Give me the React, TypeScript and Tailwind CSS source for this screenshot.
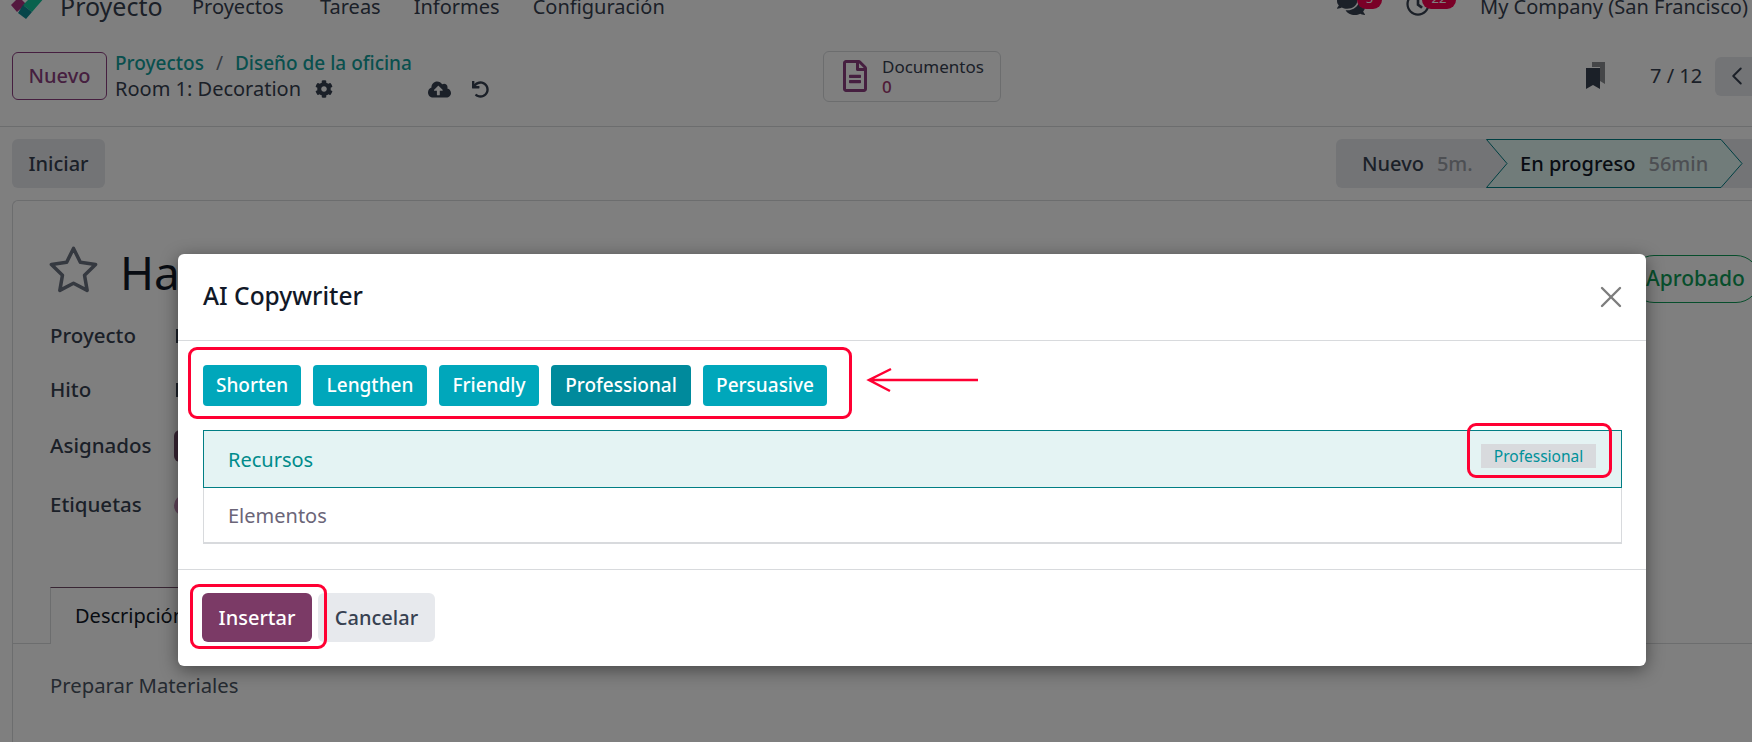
import { FaCloudUploadAlt, FaCog, FaComments, FaRegClock, FaRegFileAlt, FaUndo } from "react-icons/fa";
import { FiChevronLeft, FiStar, FiX } from "react-icons/fi";

const navItems = ["Proyectos", "Tareas", "Informes", "Configuración"];
const tones = ["Shorten", "Lengthen", "Friendly", "Professional", "Persuasive"];
const toneWidths: Record<string, string> = {
  Shorten: "w-[98px]",
  Lengthen: "w-[114px]",
  Friendly: "w-[100px]",
  Professional: "w-[140px]",
  Persuasive: "w-[124px]",
};

const Logo = () => (
  <svg width="34" height="26" viewBox="0 0 34 26" className="ml-[11px]">
    <path d="M0 11 L8 3 L15 10 L6 18 Z" fill="#a8327f" />
    <path d="M12 11 L20 3 L34 3 L21 18 Z" fill="#12c49a" />
    <path d="M12 11 L21 18 L15 25 L7 19 Z" fill="#0c8a94" />
  </svg>
);

const Badge = ({ text, className }: { text: string; className: string }) => (
  <span className={`absolute top-[-6px] h-[21px] rounded-[9px] bg-[#f5004f] text-white text-[13px] leading-[21px] text-center ${className}`}>
    {text}
  </span>
);

const Navbar = () => (
  <div className="-mt-[16px] h-[46px] flex items-center text-[#374151] text-[20px]">
    <Logo />
    <span className="ml-[15px] w-[132px] text-[25px]">Proyecto</span>
    <div className="flex gap-[33px]">
      {navItems.map((item, i) => (
        <span key={item} className={i === 0 ? "w-[95px]" : ""}>
          {item}
        </span>
      ))}
    </div>
    <div className="ml-auto flex items-center pr-[6px]">
      <div className="relative w-[69px] h-[26px] flex items-center">
        <FaComments className="text-[28px] text-[#374151] -mt-[7px]" />
        <Badge text="5" className="left-[20px] w-[25px]" />
      </div>
      <div className="relative w-[74px] h-[26px] flex items-center">
        <FaRegClock className="text-[24px] text-[#374151] -mt-[6px]" />
        <Badge text="22" className="left-[16px] w-[34px]" />
      </div>
      <span className="w-[266px] whitespace-nowrap">My Company (San Francisco)</span>
    </div>
  </div>
);

const ControlPanel = () => (
  <div className="h-[97px] pb-[4px] border-b border-[#d8dadd] flex items-center text-[#374151]">
    <div className="w-[823px] pl-3 flex items-center shrink-0">
      <button className="w-[95px] h-[48px] rounded-[6px] border border-[#8c3f80] text-[#8c3f80] text-[20px] font-medium">
        Nuevo
      </button>
      <div className="ml-2 flex flex-col">
        <div className="h-[26px] flex items-center text-[19px] font-medium text-[#12a09c] whitespace-nowrap">
          <span>Proyectos</span>
          <span className="mx-[12px] font-normal text-[#6b7280]">/</span>
          <span>Diseño de la oficina</span>
        </div>
        <div className="h-[26px] flex items-center text-[20px]">
          <span className="w-[187px] whitespace-nowrap">Room 1: Decoration</span>
          <FaCog className="ml-[13px] text-[18px]" />
          <FaCloudUploadAlt className="ml-[95px] text-[23px]" />
          <FaUndo className="ml-[21px] text-[17px]" />
        </div>
      </div>
    </div>
    <div className="w-[178px] h-[51px] rounded-[6px] border border-[#d8dadd] flex items-center pl-[15px] shrink-0">
      <FaRegFileAlt className="text-[32px] text-[#8c3f80]" />
      <div className="ml-[11px] pt-[2px] text-[17px] leading-[20px]">
        <div>Documentos</div>
        <div className="text-[#a03a70] font-medium">0</div>
      </div>
    </div>
    <div className="flex-1 flex items-center justify-end">
      <svg width="20" height="28" viewBox="0 0 20 28">
        <path d="M6 0 H19 V22 L14 19 V5 H6 Z" fill="#8a8c90" />
        <path d="M0 6 H14 V27 L7 23 L0 27 Z" fill="#374151" />
      </svg>
      <span className="ml-[44px] w-[52px] text-[20px] whitespace-nowrap">7 / 12</span>
      <div className="ml-[13px] w-[37px] h-[39px] rounded-l-[6px] bg-[#e7e9ed] flex items-center pl-[13px]">
        <FiChevronLeft className="text-[32px] -ml-[6px]" strokeWidth={1.6} />
      </div>
    </div>
  </div>
);

const StatusRow = () => (
  <div className="h-[73px] flex items-center justify-between pl-3 text-[#374151]">
    <button className="w-[93px] h-[49px] rounded-[6px] bg-[#e7e9ed] text-[20px] font-medium">Iniciar</button>
    <div className="w-[416px] h-[49px] rounded-l-[6px] bg-[#e7e9ed] flex items-center text-[20px] font-medium">
      <div className="w-[150px] pl-[26px] flex gap-[13px]">
        <span>Nuevo</span>
        <span className="text-[#9a9ea6]">5m.</span>
      </div>
      <div className="relative w-[257px] h-[49px]">
        <svg width="257" height="49" viewBox="0 0 257 49" className="absolute inset-0">
          <path d="M0.5 0.5 H235 L256 24.5 L235 48.5 H0.5 L21 24.5 Z" fill="#e2f8f4" stroke="#017e84" />
        </svg>
        <div className="absolute inset-0 pl-[34px] flex items-center gap-[13px] whitespace-nowrap">
          <span className="text-[#111827]">En progreso</span>
          <span className="text-[#9a9ea6]">56min</span>
        </div>
      </div>
    </div>
  </div>
);

const FieldRow = ({ label, top, children }: { label: string; top: string; children: React.ReactNode }) => (
  <div className={`h-[28px] pl-[37px] flex items-center ${top}`}>
    <span className="w-[124px] pb-[2px] text-[20.5px] font-medium text-[#374151]">{label}</span>
    {children}
  </div>
);

const Sheet = () => (
  <div className="ml-3 h-[600px] border border-r-0 border-[#d8dadd] rounded-tl-[6px] text-[#374151]">
    <div className="mt-[45px] h-[48px] pl-[37px] flex items-center">
      <FiStar className="text-[53px] text-[#6b7280] -ml-[3px]" strokeWidth={1.6} />
      <span className="ml-[20px] mt-[5px] text-[46px] text-[#111827]">Ha</span>
      <div className="ml-auto self-start mt-[9px] -mr-[8px] w-[130px] h-[48px] rounded-full border border-[#0f9d58] pl-[15px] flex items-center text-[21px] font-medium text-[#0f9d58]">
        Aprobado
      </div>
    </div>
    <FieldRow label="Proyecto" top="mt-[28px]">
      <span className="ml-[2px] w-[3px] h-[14px] bg-[#374151]" />
    </FieldRow>
    <FieldRow label="Hito" top="mt-[26px]">
      <span className="ml-[2px] w-[3px] h-[14px] bg-[#374151]" />
    </FieldRow>
    <FieldRow label="Asignados" top="mt-[28px]">
      <span className="w-[32px] h-[32px] rounded-[6px] bg-[#714b67]" />
    </FieldRow>
    <FieldRow label="Etiquetas" top="mt-[31px]">
      <span className="w-[50px] h-[21px] rounded-full bg-[#c58ab6]" />
    </FieldRow>
    <div className="mt-[68px] h-[57px] pl-[37px] border-b border-[#d8dadd]">
      <div className="w-[200px] h-[57px] border border-b-0 border-[#d8dadd] border-t-[#714b67] pl-[24px] flex items-center bg-white text-[20px] text-[#111827]">
        Descripción
      </div>
    </div>
    <p className="mt-[29px] pl-[37px] text-[20.3px] leading-[24px] text-[#4b5563]">Preparar Materiales</p>
  </div>
);

const Annotation = ({ className }: { className: string }) => (
  <div className={`absolute border-[3px] border-[#ff0033] rounded-[9px] ${className}`} />
);

const Modal = () => (
  <div className="relative w-[1468px] bg-white rounded-[6px] shadow-[0_4px_18px_rgba(0,0,0,0.45)] text-[#374151]">
    <div className="h-[87px] pl-[25px] pr-[24px] border-b border-[#d8dadd] flex items-center justify-between">
      <span className="pb-[1px] text-[24.5px] font-medium text-[#111827]">AI Copywriter</span>
      <FiX className="text-[36px] text-[#7d7d7d] -mr-[7px]" strokeWidth={1.6} />
    </div>
    <div className="pl-[25px] pr-[24px] pt-[24px] pb-[25px] border-b border-[#d8dadd]">
      <div className="flex gap-3">
        {tones.map((tone) => (
          <button
            key={tone}
            className={`h-[41px] rounded-[4px] text-white text-[19px] font-medium whitespace-nowrap ${toneWidths[tone]} ${
              tone === "Professional" ? "bg-[#008a9c]" : "bg-[#00a7bb]"
            }`}
          >
            {tone}
          </button>
        ))}
      </div>
      <div className="mt-[24px] h-[114px] border border-[#d8dadd] border-b-2">
        <div className="-m-px h-[58px] border border-[#017e84] bg-[#e4f3f3] pl-[24px] pr-[25px] flex items-center justify-between">
          <span className="pt-[2px] text-[20px] text-[#008b8b]">Recursos</span>
          <span className="mb-[6px] w-[115px] h-[24px] bg-[#d8dadd] text-[15.5px] leading-[24px] text-center text-[#00919a]">
            Professional
          </span>
        </div>
        <div className="h-[56px] pl-[24px] pt-[2px] flex items-center text-[20px] text-[#6b6578]">Elementos</div>
      </div>
    </div>
    <div className="pl-[24px] pt-[23px] pb-[24px] flex gap-[6px]">
      <button className="w-[110px] h-[49px] rounded-[6px] bg-[#7b3a66] text-white text-[20px] font-medium">Insertar</button>
      <button className="w-[117px] h-[49px] rounded-[6px] bg-[#e7e9ed] text-[20px] font-medium">Cancelar</button>
    </div>
    <Annotation className="left-[10px] top-[93px] w-[664px] h-[72px]" />
    <svg width="114" height="28" viewBox="0 0 114 28" className="absolute left-[688px] top-[112px]" fill="none" stroke="#ff0033" strokeWidth="2.5">
      <path d="M112 14 H4 M25 3 L3 14 L24 25" />
    </svg>
    <Annotation className="left-[1289px] top-[169px] w-[145px] h-[55px]" />
    <Annotation className="left-[12px] top-[330px] w-[137px] h-[65px]" />
  </div>
);

export default function App() {
  return (
    <div className="relative w-[1752px] h-[742px] overflow-hidden bg-white font-['Noto_Sans',sans-serif]">
      <Navbar />
      <ControlPanel />
      <StatusRow />
      <Sheet />
      <div className="absolute inset-0 bg-black/50 pl-[178px] pt-[254px]">
        <Modal />
      </div>
    </div>
  );
}
